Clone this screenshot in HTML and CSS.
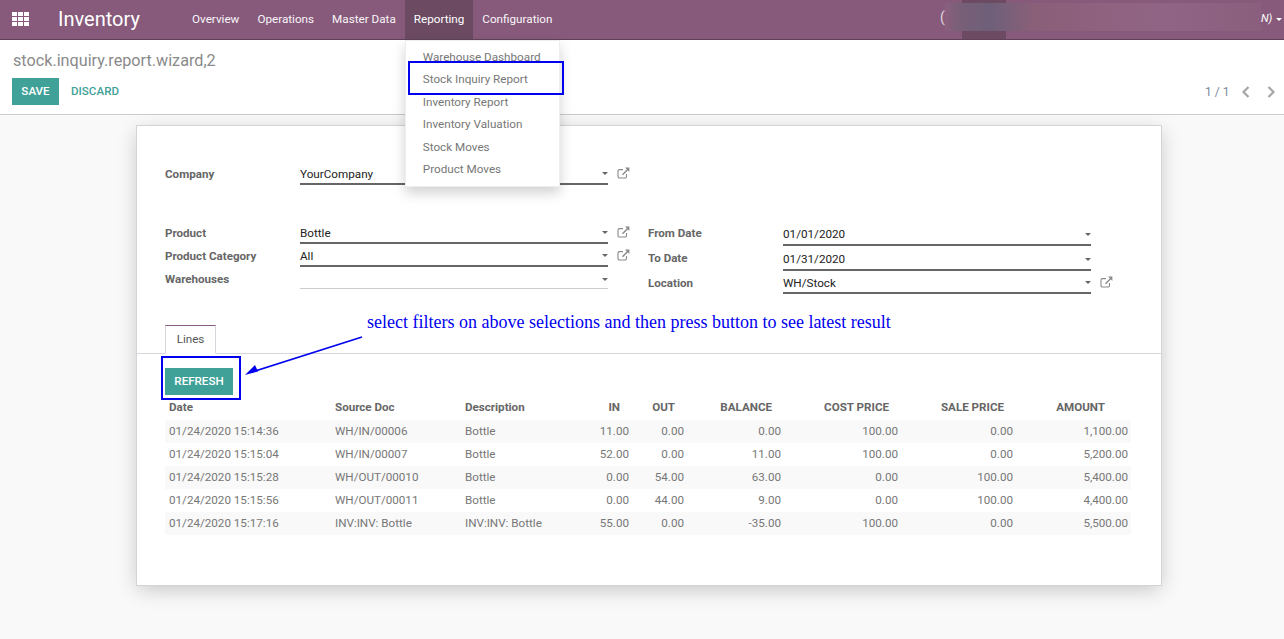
FILE: index.html
```html
<!DOCTYPE html>
<html lang="en">
<head>
<meta charset="utf-8">
<title>stock.inquiry.report.wizard,2 - Inventory</title>
<link rel="stylesheet" href="styles.css">
</head>
<body>
<svg class="defs" width="0" height="0" aria-hidden="true">
  <symbol id="ext" viewBox="0 0 13 12">
    <path d="M9.500 7v2.600a1.400 1.400 0 0 1-1.400 1.400H2.400A1.400 1.400 0 0 1 1 9.600V4A1.400 1.400 0 0 1 2.400 2.600H6" fill="none" stroke="currentColor" stroke-width="1.100"/>
    <path d="M5.500 7.700 11 2.200" fill="none" stroke="currentColor" stroke-width="1.500"/>
    <path d="M8 .6h4.400V5z" fill="currentColor"/>
  </symbol>
</svg>
<header class="navbar">
  <svg class="apps" width="17" height="14" viewBox="0 0 17 14" aria-hidden="true">
    <path d="M0 0h5v4H0zM6 0h5v4H6zM12 0h5v4h-5zM0 5h5v4H0zM6 5h5v4H6zM12 5h5v4h-5zM0 10h5v4H0zM6 10h5v4H6zM12 10h5v4h-5z" fill="#fff"/>
  </svg>
  <span class="brand">Inventory</span>
  <nav class="menu">
    <a class="menu-item">Overview</a>
    <a class="menu-item">Operations</a>
    <a class="menu-item">Master Data</a>
    <div class="menu-open">
      <a class="menu-item active">Reporting</a>
      <div class="dropdown">
        <a>Warehouse Dashboard</a>
        <a>Stock Inquiry Report</a>
        <a>Inventory Report</a>
        <a>Inventory Valuation</a>
        <a>Stock Moves</a>
        <a>Product Moves</a>
      </div>
      <div class="mark-menu"></div>
    </div>
    <a class="menu-item">Configuration</a>
  </nav>
  <div class="systray">
    <span class="paren">(</span>
    <div class="redacted"><div class="smear"></div></div>
    <span class="userend">N)</span>
    <span class="caret-w"></span>
  </div>
</header>

<section class="control">
  <div class="crumb">stock.inquiry.report.wizard,2</div>
  <div class="control-row">
    <div class="buttons">
      <button class="btn-save">SAVE</button>
      <button class="btn-discard">DISCARD</button>
    </div>
    <div class="pager">
      <span class="pager-val">1 / 1</span>
      <svg class="chev" width="10" height="12" viewBox="0 0 10 12" aria-hidden="true"><path d="M7.500 1 2.500 6l5 5" fill="none" stroke="currentColor" stroke-width="2.200"/></svg>
      <svg class="chev" width="10" height="12" viewBox="0 0 10 12" aria-hidden="true"><path d="M2.500 1l5 5-5 5" fill="none" stroke="currentColor" stroke-width="2.200"/></svg>
    </div>
  </div>
</section>

<main class="content">
  <div class="sheet">
    <div class="company-row">
      <label class="lbl">Company</label>
      <div class="field"><span>YourCompany</span><i class="caret"></i></div>
      <svg class="ext"><use href="#ext"/></svg>
    </div>

    <div class="columns">
      <div class="col col-left">
        <div class="row">
          <label class="lbl">Product</label>
          <div class="field"><span>Bottle</span><i class="caret"></i></div>
          <svg class="ext"><use href="#ext"/></svg>
        </div>
        <div class="row">
          <label class="lbl">Product Category</label>
          <div class="field"><span>All</span><i class="caret"></i></div>
          <svg class="ext"><use href="#ext"/></svg>
        </div>
        <div class="row">
          <label class="lbl">Warehouses</label>
          <div class="field empty"><span></span><i class="caret"></i></div>
        </div>
      </div>
      <div class="col col-right">
        <div class="row row-date">
          <label class="lbl">From Date</label>
          <div class="field"><span>01/01/2020</span><i class="caret"></i></div>
        </div>
        <div class="row row-date">
          <label class="lbl">To Date</label>
          <div class="field"><span>01/31/2020</span><i class="caret"></i></div>
        </div>
        <div class="row row-date row-loc">
          <label class="lbl">Location</label>
          <div class="field"><span>WH/Stock</span><i class="caret"></i></div>
          <svg class="ext"><use href="#ext"/></svg>
        </div>
      </div>
    </div>

    <div class="tabs"><a class="tab">Lines</a></div>

    <div class="tab-body">
      <button class="btn-refresh">REFRESH</button>
      <table class="lines">
        <colgroup>
          <col class="c-date"><col class="c-src"><col class="c-desc"><col class="c-in"><col class="c-out"><col class="c-bal"><col class="c-cost"><col class="c-sale"><col class="c-amt">
        </colgroup>
        <thead>
          <tr>
            <th>Date</th><th>Source Doc</th><th>Description</th>
            <th class="num">IN</th><th class="num">OUT</th><th class="num">BALANCE</th><th class="num">COST PRICE</th><th class="num">SALE PRICE</th><th class="num amt">AMOUNT</th>
          </tr>
        </thead>
        <tbody>
          <tr><td>01/24/2020 15:14:36</td><td>WH/IN/00006</td><td>Bottle</td><td class="num">11.00</td><td class="num">0.00</td><td class="num">0.00</td><td class="num">100.00</td><td class="num">0.00</td><td class="num last">1,100.00</td></tr>
          <tr><td>01/24/2020 15:15:04</td><td>WH/IN/00007</td><td>Bottle</td><td class="num">52.00</td><td class="num">0.00</td><td class="num">11.00</td><td class="num">100.00</td><td class="num">0.00</td><td class="num last">5,200.00</td></tr>
          <tr><td>01/24/2020 15:15:28</td><td>WH/OUT/00010</td><td>Bottle</td><td class="num">0.00</td><td class="num">54.00</td><td class="num">63.00</td><td class="num">0.00</td><td class="num">100.00</td><td class="num last">5,400.00</td></tr>
          <tr><td>01/24/2020 15:15:56</td><td>WH/OUT/00011</td><td>Bottle</td><td class="num">0.00</td><td class="num">44.00</td><td class="num">9.00</td><td class="num">0.00</td><td class="num">100.00</td><td class="num last">4,400.00</td></tr>
          <tr><td>01/24/2020 15:17:16</td><td>INV:INV: Bottle</td><td>INV:INV: Bottle</td><td class="num">55.00</td><td class="num">0.00</td><td class="num">-35.00</td><td class="num">100.00</td><td class="num">0.00</td><td class="num last">5,500.00</td></tr>
        </tbody>
      </table>
    </div>

    <p class="note">select filters on above selections and then press button to see latest result</p>
    <div class="mark-refresh"></div>
    <svg class="arrow" width="124" height="42" viewBox="0 0 124 42" aria-hidden="true">
      <path d="M118 1 8 36" stroke="#0000ee" stroke-width="1.600" fill="none"/>
      <path d="M1 39 11 29l3 6.500z" fill="#0000ee"/>
    </svg>
  </div>
</main>
</body>
</html>
```

FILE: styles.css
```css
* { box-sizing: border-box; }
html, body { margin: 0; height: 100%; }
body {
  font-family: Roboto, "Noto Sans", sans-serif;
  font-size: 11.650px;
  color: #666;
  background: #f9f9f9;
  display: flex;
  flex-direction: column;
  height: 639px;
  overflow: hidden;
}
.defs { position: absolute; }

/* top bar */
.navbar {
  height: 40px;
  flex: none;
  display: flex;
  align-items: center;
  background: #875a7b;
  border-bottom: 1px solid #5f4257;
  color: #fff;
  padding-left: 12px;
}
.apps { flex: none; margin-bottom: 2px; }
.brand { font-size: 20px; margin-left: 29px; width: 125px; flex: none; font-weight: 400; padding-bottom: 2px; }
.menu { display: flex; height: 39px; align-items: stretch; }
.menu-item {
  display: flex;
  align-items: center;
  padding: 0 9px 2px;
  font-size: 11.700px;
  color: #fff;
  opacity: .95;
}
.menu-open { position: relative; display: flex; }
.active { background: #6b4a62; opacity: 1; }
.dropdown {
  position: absolute;
  top: 40px;
  left: 0;
  width: 155px;
  height: 147px;
  background: #fff;
  border: 1px solid #eee;
  box-shadow: 0 6px 12px rgba(0,0,0,.18);
  padding-top: 5px;
  z-index: 5;
  display: flex;
  flex-direction: column;
}
.dropdown a {
  display: block;
  height: 22.400px;
  line-height: 22.400px;
  padding-left: 17px;
  color: #777;
  font-size: 11.700px;
  white-space: nowrap;
}
.mark-menu {
  position: absolute;
  left: 3px;
  top: 61px;
  width: 156px;
  height: 34px;
  border: 2px solid #0000ee;
  z-index: 6;
}
.systray {
  margin-left: auto;
  position: relative;
  width: 344px;
  height: 39px;
  flex: none;
}
.paren { position: absolute; left: 0; top: 9px; font-size: 14px; opacity: .75; }
.redacted {
  position: absolute;
  left: 22px;
  top: 0;
  width: 44px;
  height: 39px;
  background: #6b4a62;
}
.smear {
  position: absolute;
  left: -17px;
  top: 3px;
  width: 316px;
  height: 28px;
  background: linear-gradient(90deg, #8b5f7f 0, #7a5f78 4%, #6e5f78 14%, #75607a 18%, #8a5f78 28%, #8f6280 50%, #906484 70%, #8a5f7e 100%);
}
.userend { position: absolute; left: 321px; top: 12px; font-size: 11px; font-style: italic; }
.caret-w {
  position: absolute;
  left: 336px;
  top: 18px;
  border: 3.500px solid transparent;
  border-top-color: #fff;
  border-bottom: 0;
}

/* control panel */
.control {
  flex: none;
  height: 75px;
  background: #fff;
  border-bottom: 1px solid #ccc;
  padding: 10px 8px 0 12px;
}
.crumb { font-size: 16.200px; color: #8a8a8a; line-height: 21px; padding-left: 1px; }
.control-row { display: flex; align-items: center; justify-content: space-between; margin-top: 7px; }
.buttons { display: flex; align-items: center; }
.btn-save, .btn-refresh {
  border: 0;
  background: #3fa198;
  color: #fff;
  font: 500 11.600px Roboto, sans-serif;
  padding: 0 0 1px;
}
.btn-save { width: 47px; height: 27px; }
.btn-discard {
  border: 0;
  background: none;
  color: #3fa198;
  font: 500 11.600px Roboto, sans-serif;
  padding: 0 0 1px;
  margin-left: 12px;
}
.pager { display: flex; align-items: center; color: #8a8a8a; }
.pager-val { color: #7c8a9c; width: 36px; font-size: 12px; }
.chev { color: #a6a6a6; }
.chev + .chev { margin-left: 15px; }

/* sheet */
.content { flex: 1; padding: 10px 122px 0 136px; }
.sheet {
  position: relative;
  width: 1026px;
  height: 461px;
  background: #fff;
  border: 1px solid #d4d4d8;
  box-shadow: 0 5px 20px -2px rgba(0,0,0,.22);
  padding-top: 41px;
}
.lbl { font-weight: 700; color: #666; font-size: 11.600px; width: 135px; flex: none; line-height: 15px; }
.company-row, .row { display: flex; align-items: flex-start; }
.company-row { padding-left: 28px; height: 46px; }
.field {
  display: flex;
  align-items: center;
  justify-content: space-between;
  width: 308px;
  height: 18px;
  color: #222;
  font-size: 11.700px;
  border-bottom: 2px solid #666;
  flex: none;
  padding-bottom: 3px;
}
.field.empty { border-bottom: 1px solid #ccc; height: 17px; padding-bottom: 2px; }
.caret {
  border: 3.500px solid transparent;
  border-top-color: #666;
  border-bottom: 0;
}
.ext { width: 13px; height: 12px; margin-left: 9px; color: #8a8a8a; flex: none; }
.columns { display: flex; margin-top: 13px; padding-left: 28px; height: 93px; }
.col-left { width: 483px; flex: none; }
.col-right { flex: 1; }
.row { height: 23px; }
.row-date { height: 25px; }
.row-date .field { height: 20px; padding-bottom: 2px; }
.row-loc .field { height: 18px; padding-bottom: 3px; }

/* tabs */
.tabs { border-bottom: 1px solid #d6d6dc; height: 35px; padding-left: 28px; display: flex; align-items: flex-end; }
.tab {
  width: 51px;
  height: 29px;
  border: 1px solid #d6d6dc;
  border-top: 1px solid #875a7b;
  border-bottom: 1px solid #fff;
  margin-bottom: -1px;
  background: #fff;
  text-align: center;
  line-height: 27px;
  color: #555;
}
.tab-body { padding: 14px 30px 0 28px; }
.btn-refresh { width: 68px; height: 27px; display: block; }
.lines { border-collapse: collapse; table-layout: fixed; width: 966px; }
.c-date { width: 166px; }
.c-src { width: 130px; }
.c-desc { width: 122px; }
.c-in { width: 50px; }
.c-out { width: 55px; }
.c-bal { width: 97px; }
.c-cost { width: 117px; }
.c-sale { width: 115px; }
.c-amt { width: 114px; }
th { font-weight: 700; font-size: 11.600px; text-align: left; height: 25px; padding: 0 4px 2px; color: #666; }
td { height: 23px; padding: 0 4px 2px; color: #777; }
th.num { text-align: right; padding-right: 13px; }
th.amt { padding-right: 26px; }
td.num { text-align: right; padding-right: 4px; }
td.last { padding-right: 3px; }
tbody tr:nth-child(odd) { background: #f9f9f9; }

/* annotations */
.note {
  position: absolute;
  left: 230px;
  top: 186px;
  margin: 0;
  font: 18px "Liberation Serif", serif;
  color: #0000ee;
  white-space: nowrap;
}
.mark-refresh {
  position: absolute;
  left: 24px;
  top: 230px;
  width: 80px;
  height: 44px;
  border: 2px solid #0000ee;
}
.arrow { position: absolute; left: 107px; top: 210px; }
```
